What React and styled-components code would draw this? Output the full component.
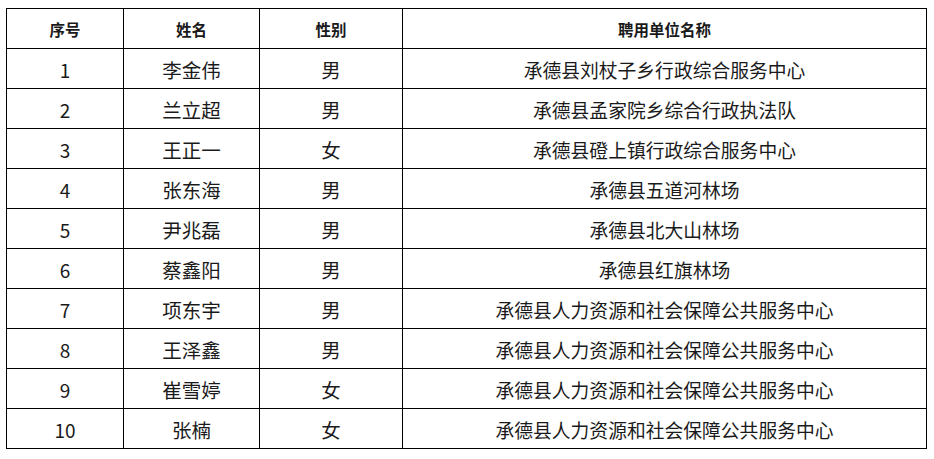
import React from 'react';
import styled, { createGlobalStyle } from 'styled-components';

const GlobalStyle = createGlobalStyle`
  html, body {
    margin: 0;
    padding: 0;
    background: #fff;
  }
  body {
    padding: 8px 0 0 6px;
    font-family: "Microsoft YaHei", "Noto Sans CJK SC", "Liberation Sans", sans-serif;
  }
`;

const Table = styled.table`
  border-collapse: collapse;
  table-layout: fixed;
  width: 921px;
  color: #1a1a1a;
`;

const Col = styled.col`
  width: ${(p) => p.$w}px;
`;

const Row = styled.tr`
  height: 40px;
`;

const Th = styled.th`
  border: 1px solid #000;
  padding: 0;
  font-size: 15.5px;
  font-weight: 700;
  text-align: center;
  vertical-align: middle;
  line-height: 20px;
`;

const Td = styled.td`
  border: 1px solid #000;
  padding: 2px 0 0;
  font-size: ${(p) => p.$size}px;
  font-weight: 400;
  text-align: center;
  vertical-align: middle;
  line-height: 22px;
`;

const rows = [
  ['1', '李金伟', '男', '承德县刘杖子乡行政综合服务中心'],
  ['2', '兰立超', '男', '承德县孟家院乡综合行政执法队'],
  ['3', '王正一', '女', '承德县磴上镇行政综合服务中心'],
  ['4', '张东海', '男', '承德县五道河林场'],
  ['5', '尹兆磊', '男', '承德县北大山林场'],
  ['6', '蔡鑫阳', '男', '承德县红旗林场'],
  ['7', '项东宇', '男', '承德县人力资源和社会保障公共服务中心'],
  ['8', '王泽鑫', '男', '承德县人力资源和社会保障公共服务中心'],
  ['9', '崔雪婷', '女', '承德县人力资源和社会保障公共服务中心'],
  ['10', '张楠', '女', '承德县人力资源和社会保障公共服务中心'],
];

export default function App() {
  return (
    <>
      <GlobalStyle />
      <Table>
        <colgroup>
          <Col $w={117} />
          <Col $w={136} />
          <Col $w={143} />
          <Col $w={524} />
        </colgroup>
        <thead>
          <Row>
            <Th>序号</Th>
            <Th>姓名</Th>
            <Th>性别</Th>
            <Th>聘用单位名称</Th>
          </Row>
        </thead>
        <tbody>
          {rows.map((r) => (
            <Row key={r[0]}>
              <Td $size={19}>{r[0]}</Td>
              <Td $size={19.5}>{r[1]}</Td>
              <Td $size={19.5}>{r[2]}</Td>
              <Td $size={18.8}>{r[3]}</Td>
            </Row>
          ))}
        </tbody>
      </Table>
    </>
  );
}
